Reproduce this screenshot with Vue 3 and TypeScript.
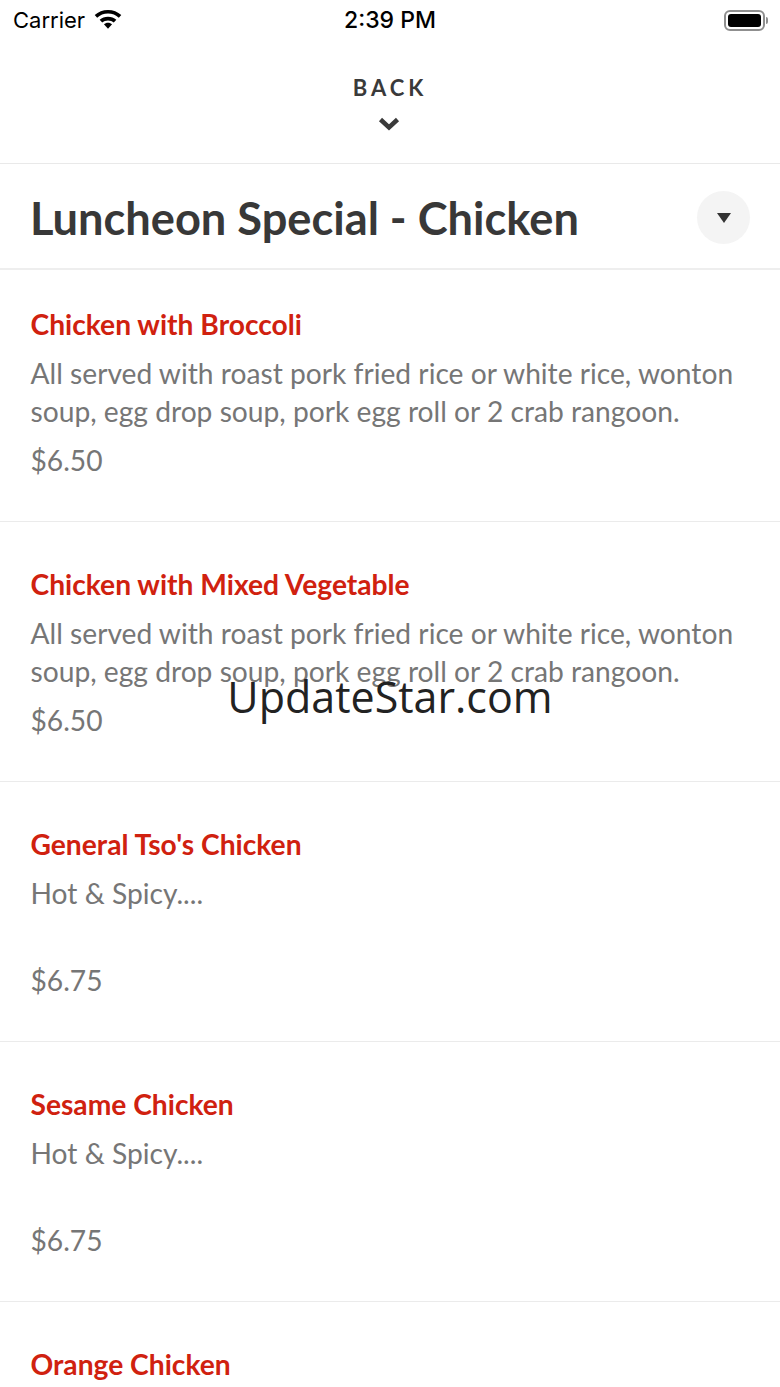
<template>
  <div class="screen">
    <div class="status-bar">
      <div class="status-left">
        <span class="carrier">Carrier</span>
        <svg class="wifi" width="30" height="22" viewBox="0 0 28 20">
          <path d="M14 1.500C9.200 1.500 4.900 3.300 1.600 6.300L3.900 8.800C6.600 6.300 10.100 4.900 14 4.900s7.400 1.400 10.100 3.900l2.300-2.500C23.100 3.300 18.800 1.500 14 1.500z" />
          <path d="M14 7.800c-3 0-5.700 1.100-7.800 3l2.400 2.500c1.400-1.300 3.300-2 5.400-2s4 .7 5.400 2l2.400-2.500c-2.100-1.900-4.800-3-7.800-3z" />
          <path d="M14 13.600c-1.500 0-2.800.6-3.800 1.400L14 19l3.800-4C16.800 14.200 15.500 13.600 14 13.600z" />
        </svg>
      </div>
      <span class="time">2:39 PM</span>
      <div class="battery">
        <div class="battery-shell"><div class="battery-fill"></div></div>
        <div class="battery-cap"></div>
      </div>
    </div>

    <div class="back">
      <span class="back-label">BACK</span>
      <svg class="chevron" width="24" height="14" viewBox="0 0 24 14">
        <path d="M3.500 2.500 12 10.500l8.500-8" />
      </svg>
    </div>

    <div class="section-head">
      <h1>Luncheon Special - Chicken</h1>
      <button class="toggle" aria-label="Collapse">
        <span class="caret"></span>
      </button>
    </div>

    <div class="menu">
      <div v-for="item in items" :key="item.name" class="item">
        <div class="name">{{ item.name }}</div>
        <p class="desc">{{ item.desc }}</p>
        <div class="price">{{ item.price }}</div>
      </div>
    </div>

    <div class="watermark">UpdateStar.com</div>
  </div>
</template>

<script setup lang="ts">
interface MenuItem {
  name: string
  desc: string
  price: string
}

const served = 'All served with roast pork fried rice or white rice, wonton soup, egg drop soup, pork egg roll or 2 crab rangoon.'

const items: MenuItem[] = [
  { name: 'Chicken with Broccoli', desc: served, price: '$6.50' },
  { name: 'Chicken with Mixed Vegetable', desc: served, price: '$6.50' },
  { name: "General Tso's Chicken", desc: 'Hot & Spicy....', price: '$6.75' },
  { name: 'Sesame Chicken', desc: 'Hot & Spicy....', price: '$6.75' },
  { name: 'Orange Chicken', desc: '', price: '' },
]
</script>

<style>
html,
body {
  margin: 0;
  background: #fff;
}
</style>

<style scoped>
.screen {
  position: relative;
  width: 780px;
  height: 1387px;
  overflow: hidden;
  background: #fff;
  font-family: Lato, "Liberation Sans", sans-serif;
}

.status-bar {
  height: 40px;
  display: grid;
  grid-template-columns: 1fr auto 1fr;
  align-items: center;
  padding: 0 13px;
  box-sizing: border-box;
  font-family: Inter, "Liberation Sans", sans-serif;
  color: #000;
}

.status-left {
  display: flex;
  align-items: center;
  gap: 8px;
}

.carrier {
  font-size: 22px;
}

.wifi {
  fill: #000;
  margin-top: -2px;
}

.time {
  font-size: 23px;
  font-weight: 500;
}

.battery {
  justify-self: end;
  display: flex;
  align-items: center;
  margin-right: -1px;
}

.battery-shell {
  width: 41px;
  height: 21px;
  box-sizing: border-box;
  border: 2px solid #8f8f8f;
  border-radius: 6px;
  padding: 2px;
}

.battery-fill {
  height: 100%;
  background: #000;
  border-radius: 3px;
}

.battery-cap {
  width: 2px;
  height: 7px;
  margin-left: 1px;
  background: #8f8f8f;
  border-radius: 0 2px 2px 0;
}

.back {
  height: 124px;
  box-sizing: border-box;
  border-bottom: 1px solid #e9e9e9;
  display: flex;
  flex-direction: column;
  align-items: center;
  padding-top: 33px;
  color: #3a3a3a;
}

.back-label {
  font-size: 22px;
  line-height: 30px;
  font-weight: 700;
  letter-spacing: 4px;
}

.chevron {
  margin-top: 14px;
  margin-left: -2px;
  fill: none;
  stroke: #3a3a3a;
  stroke-width: 4.5;
}

.section-head {
  height: 106px;
  box-sizing: border-box;
  border-bottom: 2px solid #eeeeee;
  display: flex;
  align-items: center;
  justify-content: space-between;
  padding: 2px 30px 0 31px;
}

h1 {
  margin: 0 0 0 -1px;
  font-size: 45.2px;
  font-weight: 700;
  color: #383838;
}

.toggle {
  width: 53px;
  height: 53px;
  padding: 0;
  border: none;
  border-radius: 50%;
  background: #f4f4f4;
  display: flex;
  align-items: center;
  justify-content: center;
}

.caret {
  width: 0;
  height: 0;
  margin-top: 2px;
  border-left: 7px solid transparent;
  border-right: 7px solid transparent;
  border-top: 10px solid #333;
}

.item {
  height: 260px;
  box-sizing: border-box;
  padding: 44px 30px 0 30.5px;
  border-bottom: 1px solid #ebebeb;
}

.item:first-child {
  height: 252px;
  padding-top: 36px;
}

.name {
  font-size: 28.2px;
  line-height: 36px;
  font-weight: 700;
  color: #d0210f;
}

.desc {
  margin: 12px 0 0;
  height: 76px;
  font-size: 28.2px;
  line-height: 38px;
  color: #767676;
}

.price {
  margin-top: 11px;
  font-size: 28.2px;
  line-height: 38px;
  color: #767676;
}

.watermark {
  position: absolute;
  left: 0;
  right: 0;
  top: 666px;
  text-align: center;
  font-family: "Open Sans", sans-serif;
  font-size: 43px;
  line-height: 62px;
  color: #222;
}
</style>
